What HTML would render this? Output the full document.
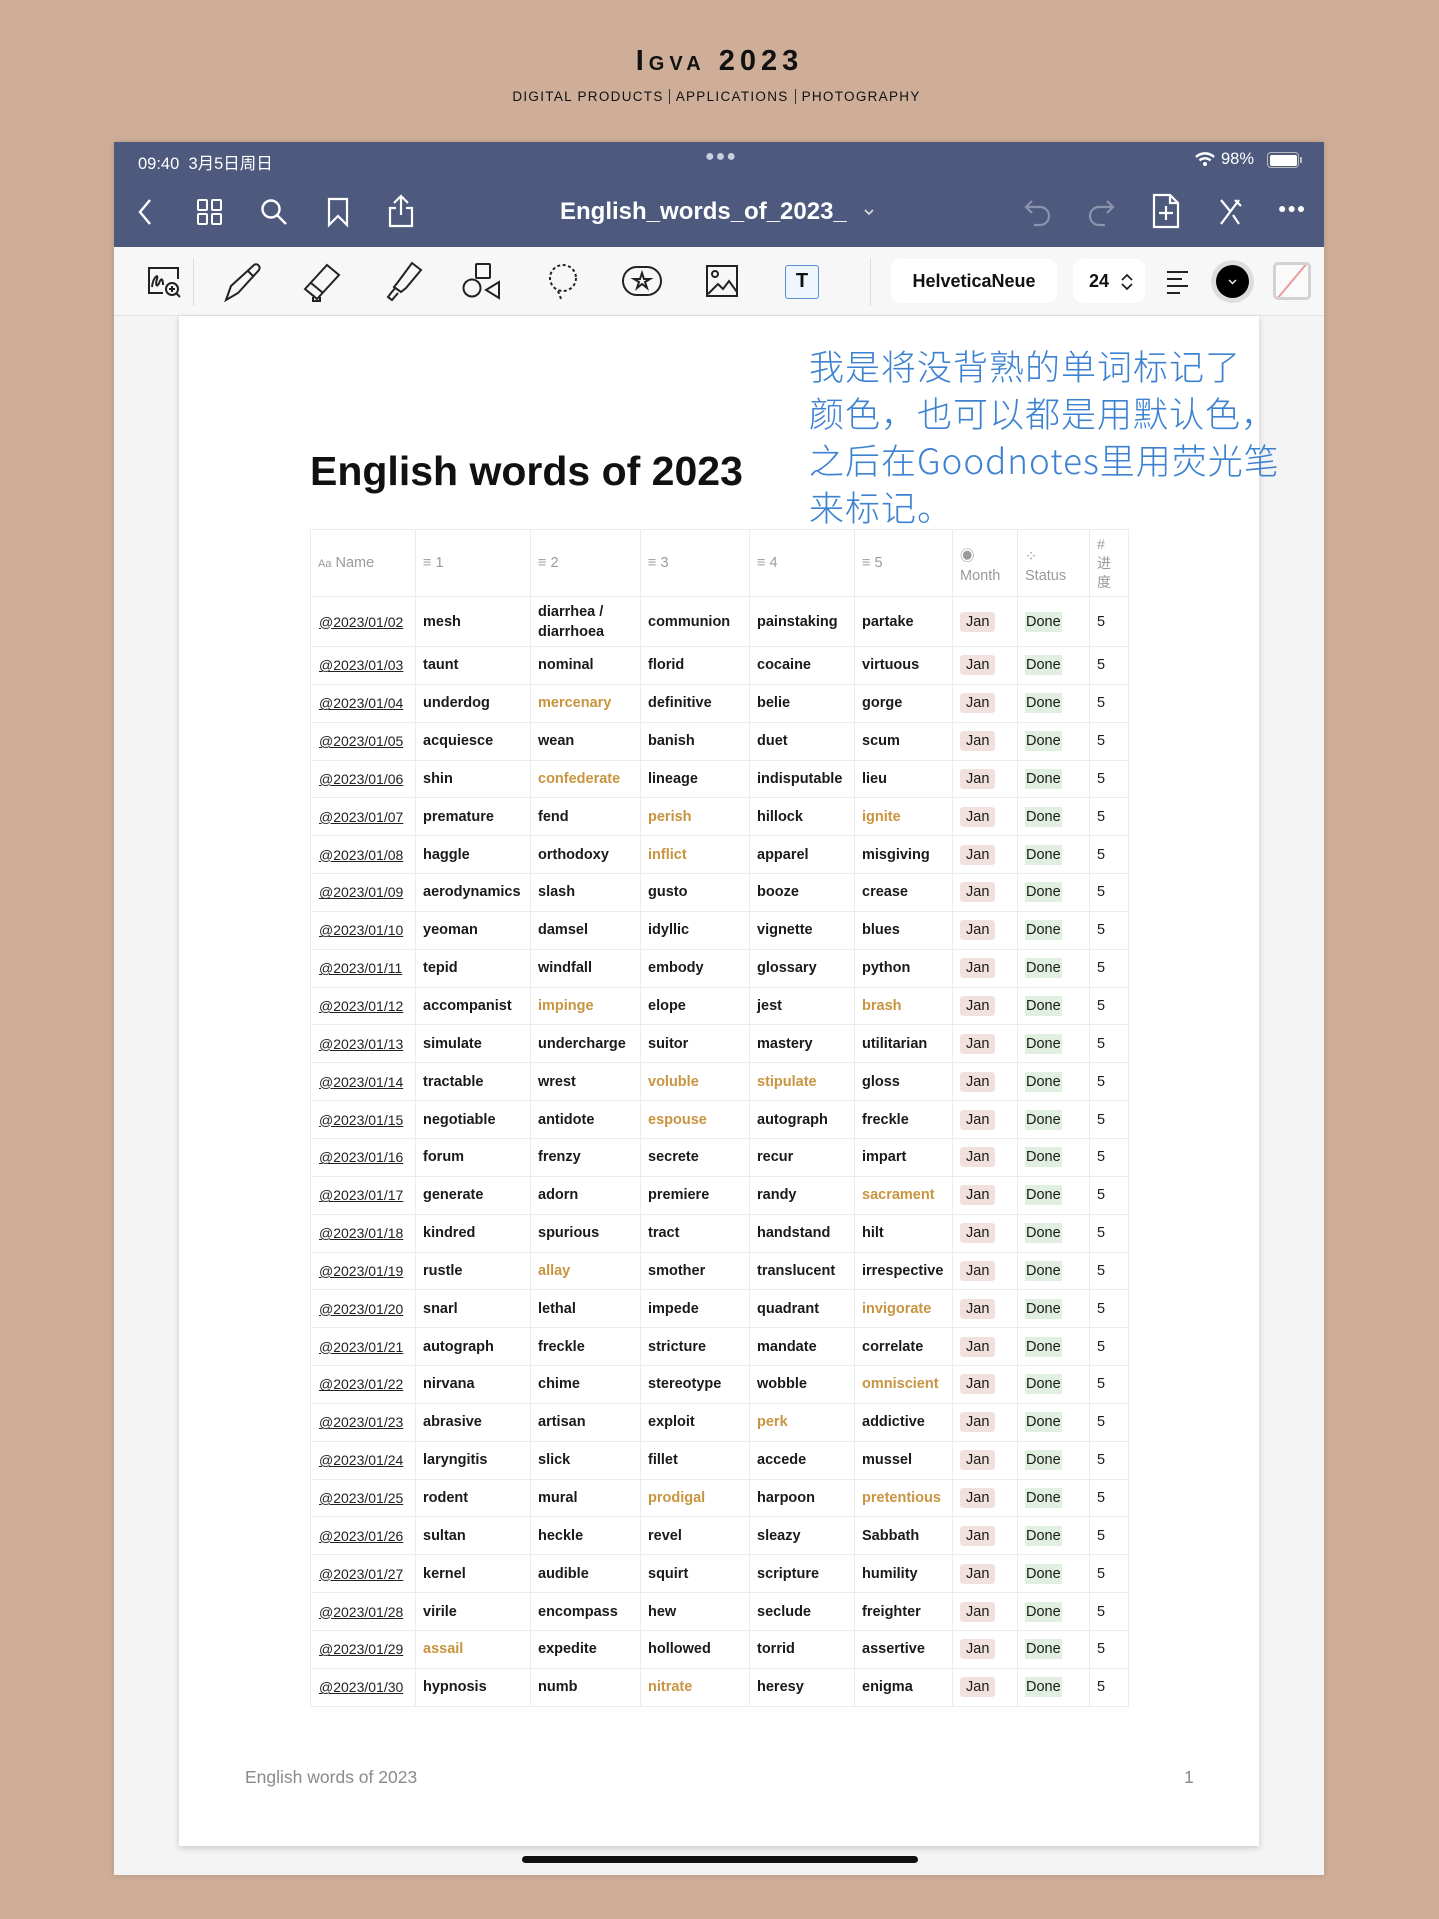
<!DOCTYPE html>
<html><head><meta charset="utf-8">
<style>
*{margin:0;padding:0;box-sizing:border-box}
body{width:1439px;height:1919px;background:#ceae98;position:relative;overflow:hidden;font-family:"Liberation Sans","Noto Sans CJK SC",sans-serif}
.abs{position:absolute}
#brand{left:0;width:1439px;top:45px;text-align:center;font-size:29px;font-weight:bold;letter-spacing:5px;color:#111;font-variant:small-caps}
#sub{left:0;width:1439px;top:89px;text-align:center;font-size:13.5px;letter-spacing:1.3px;color:#111}
#sub span{border-left:1px solid #333;padding:0 6px}
#dev{left:114px;top:142px;width:1210px;height:1733px;background:#f4f4f4;box-shadow:0 0 6px rgba(0,0,0,.15)}
#nav{left:114px;top:142px;width:1210px;height:105px;background:#4d5a7e;color:#fff}
#tool{left:114px;top:247px;width:1210px;height:69px;background:#f7f7f7;border-bottom:1px solid #e2e2e2}
#page{left:179px;top:316px;width:1080px;height:1530px;background:#fff;box-shadow:0 2px 6px rgba(0,0,0,.18)}
.w{color:#fff}
svg{position:absolute;overflow:visible}
table{position:absolute;left:310px;top:529px;border-collapse:collapse;table-layout:fixed;width:818px}
td{border:1px solid #ececec;font-size:14.5px;font-weight:bold;color:#1a1a1a;padding:0 0 0 7px;height:37.85px;white-space:nowrap;overflow:hidden}
tr.h td{height:67px;font-weight:normal;color:#9a9a9a;font-size:14.5px}
tr.f td{height:50px}
td.d{font-weight:normal;text-decoration:underline;color:#222;font-size:14px;padding-left:8px}
.o{color:#c9943f}
.j{background:#f1e1dc;padding:2px 6px;border-radius:3px;font-weight:normal}
.dn{background:#e1efe1;padding:2px 1px;font-weight:normal}
td.n{font-weight:normal}
#note{left:809px;top:342px;font-family:"WenQuanYi Zen Hei","Noto Sans CJK SC",sans-serif;font-size:35px;line-height:47px;color:#3d82d0;letter-spacing:1px;font-weight:300}
</style></head><body>
<div class="abs" id="brand">Igva 2023</div>
<div class="abs" id="sub">DIGITAL PRODUCTS <span>APPLICATIONS</span><span>PHOTOGRAPHY</span></div>
<div class="abs" id="dev"></div>
<div class="abs" id="nav"></div>
<div class="abs w" style="left:138px;top:150px;font-size:16.5px">09:40&nbsp; 3月5日周日</div>
<div class="abs w" style="left:705px;top:148px;font-size:16px;letter-spacing:1px;color:#c9cfe0">●●●</div>
<svg style="left:1195px;top:151px" width="20" height="16"><path d="M1 6 A13 13 0 0 1 19 6" stroke="#fff" stroke-width="2.4" fill="none"/><path d="M4.5 9.5 A8 8 0 0 1 15.5 9.5" stroke="#fff" stroke-width="2.4" fill="none"/><circle cx="10" cy="13" r="2" fill="#fff"/></svg>
<div class="abs w" style="left:1221px;top:150px;font-size:16.5px">98%</div>
<div class="abs" style="left:1267px;top:152px;width:32px;height:16px;border:1.5px solid #bbb;border-radius:4px;padding:1.5px"><div style="width:100%;height:100%;background:#fff;border-radius:2px"></div></div>
<div class="abs" style="left:1300px;top:157px;width:2px;height:6px;background:#bbb"></div>
<svg style="left:136px;top:198px" width="20" height="28"><path d="M14 2 L4 14 L14 26" stroke="#fff" stroke-width="2.4" fill="none"/></svg>
<svg style="left:197px;top:199px" width="26" height="26" fill="none" stroke="#fff" stroke-width="2"><rect x="1" y="1" width="9" height="10" rx="1"/><rect x="15" y="1" width="9" height="10" rx="1"/><rect x="1" y="15" width="9" height="10" rx="1"/><rect x="15" y="15" width="9" height="10" rx="1"/></svg>
<svg style="left:260px;top:198px" width="28" height="28" fill="none" stroke="#fff" stroke-width="2.4"><circle cx="11" cy="11" r="8.5"/><path d="M17 17 L26 26"/></svg>
<svg style="left:327px;top:197px" width="22" height="30" fill="none" stroke="#fff" stroke-width="2.2"><path d="M2 2 H20 V28 L11 19 L2 28 Z"/></svg>
<svg style="left:388px;top:194px" width="26" height="34" fill="none" stroke="#fff" stroke-width="2.2"><path d="M13 2 V21 M6 9 L13 2 L20 9 M8 14 H2 V32 H24 V14 H18"/></svg>
<div class="abs w" style="left:560px;top:198px;font-size:24px;font-weight:bold">English_words_of_2023_</div>
<svg style="left:864px;top:208px" width="10" height="8"><path d="M1 2 L5 6 L9 2" stroke="#ddd" stroke-width="1.6" fill="none"/></svg>
<svg style="left:1024px;top:198px" width="28" height="28" fill="none" stroke="#8b93ad" stroke-width="2.2"><path d="M8 3 L2 9 L8 15 M2 9 H16 A9 9 0 0 1 16 27 H10"/></svg>
<svg style="left:1087px;top:198px" width="28" height="28" fill="none" stroke="#8b93ad" stroke-width="2.2"><path d="M20 3 L26 9 L20 15 M26 9 H12 A9 9 0 0 0 12 27 H18"/></svg>
<svg style="left:1152px;top:193px" width="28" height="36" fill="none" stroke="#fff" stroke-width="2.2"><path d="M2 2 H18 L26 10 V34 H2 Z M18 2 V10 H26 M14 13 V27 M7 20 H21"/></svg>
<svg style="left:1217px;top:198px" width="26" height="28" fill="none" stroke="#fff" stroke-width="2.2"><path d="M4 26 L22 2 M4 2 L13 13 M16 17 L22 26 M18 2 L24 8"/></svg>
<div class="abs w" style="left:1278px;top:200px;font-size:14px;letter-spacing:1px">●●●</div>
<div class="abs" id="tool"></div>
<div class="abs" style="left:193px;top:258px;width:1px;height:48px;background:#ddd"></div>
<div class="abs" style="left:870px;top:258px;width:1px;height:48px;background:#ddd"></div>
<svg style="left:147px;top:265px" width="36" height="34" fill="none" stroke="#222" stroke-width="2"><path d="M16 28 H2 V3 H31 V14"/><path d="M5 22 C6 12 12 8 10 14 C8 20 10 24 13 16 C15 12 16 16 16 20"/><circle cx="25" cy="24" r="6"/><path d="M25 21 V27 M22 24 H28 M29 28 L33 32"/></svg>
<svg style="left:223px;top:262px" width="40" height="40" fill="none" stroke="#222" stroke-width="2"><path d="M3 38 L8 24 L31 3 C34 1 38 4 36 8 L15 31 Z M25 9 L30 14"/></svg>
<svg style="left:302px;top:262px" width="42" height="40" fill="none" stroke="#222" stroke-width="2"><path d="M3 27 L25 3 L37 13 L15 37 Z M3 27 L13 35 M9 21 L21 31"/><path d="M11 35 V39 H18 V35"/></svg>
<svg style="left:384px;top:262px" width="40" height="40" fill="none" stroke="#222" stroke-width="2"><path d="M37 8 L28 1 L14 20 L10 25 L17 30 L22 26 Z M12 25 L7 31 L4 35 L8 38 L14 31"/></svg>
<svg style="left:462px;top:263px" width="40" height="38" fill="none" stroke="#222" stroke-width="2"><rect x="14" y="1" width="14" height="14" rx="1"/><circle cx="10" cy="25" r="8.5"/><path d="M37 19 V35 L24 27 Z"/></svg>
<svg style="left:545px;top:263px" width="36" height="38" fill="none" stroke="#222" stroke-width="2" stroke-dasharray="3 2.5"><circle cx="18" cy="15" r="13"/><path d="M13 28 L16 36"/></svg>
<svg style="left:621px;top:265px" width="42" height="34" fill="none" stroke="#222" stroke-width="2"><rect x="2" y="2" width="38" height="28" rx="14"/><path d="M21 8 L23 14 H29 L24 17 L26 23 L21 19 L16 23 L18 17 L13 14 H19 Z"/></svg>
<svg style="left:705px;top:264px" width="34" height="34" fill="none" stroke="#222" stroke-width="2"><rect x="2" y="2" width="30" height="30"/><circle cx="10" cy="10" r="3"/><path d="M3 30 L13 20 L18 25 L24 17 L32 28"/></svg>
<div class="abs" style="left:785px;top:265px;width:34px;height:34px;border:1.5px solid #5b8fd4;border-radius:3px;background:#f0f6ff;text-align:center;font-weight:bold;font-size:20px;line-height:31px;color:#111">T</div>
<div class="abs" style="left:891px;top:259px;width:166px;height:44px;background:#fff;border-radius:10px;text-align:center;line-height:44px;font-size:18px;font-weight:bold;color:#111">HelveticaNeue</div>
<div class="abs" style="left:1073px;top:259px;width:72px;height:44px;background:#fff;border-radius:10px;line-height:44px;font-size:18px;font-weight:bold;color:#111;padding-left:16px">24</div>
<svg style="left:1120px;top:272px" width="14" height="20" fill="none" stroke="#222" stroke-width="1.8"><path d="M2 8 L7 3 L12 8 M2 12 L7 17 L12 12"/></svg>
<svg style="left:1166px;top:270px" width="26" height="24" stroke="#222" stroke-width="2"><path d="M1 2 H22 M1 9 H16 M1 16 H22 M1 23 H14"/></svg>
<div class="abs" style="left:1211px;top:260px;width:43px;height:43px;border-radius:50%;background:#ddd"></div>
<div class="abs" style="left:1216px;top:265px;width:33px;height:33px;border-radius:50%;background:#000"></div>
<svg style="left:1228px;top:279px" width="9" height="6"><path d="M1 1 L4.5 4.5 L8 1" stroke="#fff" stroke-width="1.3" fill="none"/></svg>
<div class="abs" style="left:1273px;top:262px;width:38px;height:38px;border:3px solid #d2d2d2;border-radius:5px;background:#fafafa;overflow:hidden"><div style="position:absolute;left:15px;top:-6px;width:1.5px;height:44px;background:#e99;transform:rotate(40deg)"></div></div>
<div class="abs" id="page"></div>
<div class="abs" style="left:310px;top:448px;font-size:41px;font-weight:bold;color:#111">English words of 2023</div>
<div class="abs" id="note">我是将没背熟的单词标记了<br>颜色，也可以都是用默认色，<br>之后在Goodnotes里用荧光笔<br>来标记。</div>
<table>
<colgroup><col style="width:105px"><col style="width:115px"><col style="width:110px"><col style="width:109px"><col style="width:105px"><col style="width:98px"><col style="width:65px"><col style="width:72px"><col style="width:39px"></colgroup>
<tr class="h"><td><span style="font-size:11px">Aa</span> Name</td><td>≡ 1</td><td>≡ 2</td><td>≡ 3</td><td>≡ 4</td><td>≡ 5</td><td style="line-height:19px;padding-top:8px">◉<br>Month</td><td style="line-height:19px;padding-top:8px">⁘<br>Status</td><td style="line-height:19px;font-size:14px">#<br>进<br>度</td></tr>
<tr class="f"><td class="d">@2023/01/02</td><td>mesh</td><td style="line-height:20px">diarrhea /<br>diarrhoea</td><td>communion</td><td>painstaking</td><td>partake</td><td><span class="j">Jan</span></td><td><span class="dn">Done</span></td><td class="n">5</td></tr>
<tr><td class="d">@2023/01/03</td><td>taunt</td><td>nominal</td><td>florid</td><td>cocaine</td><td>virtuous</td><td><span class="j">Jan</span></td><td><span class="dn">Done</span></td><td class="n">5</td></tr>
<tr><td class="d">@2023/01/04</td><td>underdog</td><td class="o">mercenary</td><td>definitive</td><td>belie</td><td>gorge</td><td><span class="j">Jan</span></td><td><span class="dn">Done</span></td><td class="n">5</td></tr>
<tr><td class="d">@2023/01/05</td><td>acquiesce</td><td>wean</td><td>banish</td><td>duet</td><td>scum</td><td><span class="j">Jan</span></td><td><span class="dn">Done</span></td><td class="n">5</td></tr>
<tr><td class="d">@2023/01/06</td><td>shin</td><td class="o">confederate</td><td>lineage</td><td>indisputable</td><td>lieu</td><td><span class="j">Jan</span></td><td><span class="dn">Done</span></td><td class="n">5</td></tr>
<tr><td class="d">@2023/01/07</td><td>premature</td><td>fend</td><td class="o">perish</td><td>hillock</td><td class="o">ignite</td><td><span class="j">Jan</span></td><td><span class="dn">Done</span></td><td class="n">5</td></tr>
<tr><td class="d">@2023/01/08</td><td>haggle</td><td>orthodoxy</td><td class="o">inflict</td><td>apparel</td><td>misgiving</td><td><span class="j">Jan</span></td><td><span class="dn">Done</span></td><td class="n">5</td></tr>
<tr><td class="d">@2023/01/09</td><td>aerodynamics</td><td>slash</td><td>gusto</td><td>booze</td><td>crease</td><td><span class="j">Jan</span></td><td><span class="dn">Done</span></td><td class="n">5</td></tr>
<tr><td class="d">@2023/01/10</td><td>yeoman</td><td>damsel</td><td>idyllic</td><td>vignette</td><td>blues</td><td><span class="j">Jan</span></td><td><span class="dn">Done</span></td><td class="n">5</td></tr>
<tr><td class="d">@2023/01/11</td><td>tepid</td><td>windfall</td><td>embody</td><td>glossary</td><td>python</td><td><span class="j">Jan</span></td><td><span class="dn">Done</span></td><td class="n">5</td></tr>
<tr><td class="d">@2023/01/12</td><td>accompanist</td><td class="o">impinge</td><td>elope</td><td>jest</td><td class="o">brash</td><td><span class="j">Jan</span></td><td><span class="dn">Done</span></td><td class="n">5</td></tr>
<tr><td class="d">@2023/01/13</td><td>simulate</td><td>undercharge</td><td>suitor</td><td>mastery</td><td>utilitarian</td><td><span class="j">Jan</span></td><td><span class="dn">Done</span></td><td class="n">5</td></tr>
<tr><td class="d">@2023/01/14</td><td>tractable</td><td>wrest</td><td class="o">voluble</td><td class="o">stipulate</td><td>gloss</td><td><span class="j">Jan</span></td><td><span class="dn">Done</span></td><td class="n">5</td></tr>
<tr><td class="d">@2023/01/15</td><td>negotiable</td><td>antidote</td><td class="o">espouse</td><td>autograph</td><td>freckle</td><td><span class="j">Jan</span></td><td><span class="dn">Done</span></td><td class="n">5</td></tr>
<tr><td class="d">@2023/01/16</td><td>forum</td><td>frenzy</td><td>secrete</td><td>recur</td><td>impart</td><td><span class="j">Jan</span></td><td><span class="dn">Done</span></td><td class="n">5</td></tr>
<tr><td class="d">@2023/01/17</td><td>generate</td><td>adorn</td><td>premiere</td><td>randy</td><td class="o">sacrament</td><td><span class="j">Jan</span></td><td><span class="dn">Done</span></td><td class="n">5</td></tr>
<tr><td class="d">@2023/01/18</td><td>kindred</td><td>spurious</td><td>tract</td><td>handstand</td><td>hilt</td><td><span class="j">Jan</span></td><td><span class="dn">Done</span></td><td class="n">5</td></tr>
<tr><td class="d">@2023/01/19</td><td>rustle</td><td class="o">allay</td><td>smother</td><td>translucent</td><td>irrespective</td><td><span class="j">Jan</span></td><td><span class="dn">Done</span></td><td class="n">5</td></tr>
<tr><td class="d">@2023/01/20</td><td>snarl</td><td>lethal</td><td>impede</td><td>quadrant</td><td class="o">invigorate</td><td><span class="j">Jan</span></td><td><span class="dn">Done</span></td><td class="n">5</td></tr>
<tr><td class="d">@2023/01/21</td><td>autograph</td><td>freckle</td><td>stricture</td><td>mandate</td><td>correlate</td><td><span class="j">Jan</span></td><td><span class="dn">Done</span></td><td class="n">5</td></tr>
<tr><td class="d">@2023/01/22</td><td>nirvana</td><td>chime</td><td>stereotype</td><td>wobble</td><td class="o">omniscient</td><td><span class="j">Jan</span></td><td><span class="dn">Done</span></td><td class="n">5</td></tr>
<tr><td class="d">@2023/01/23</td><td>abrasive</td><td>artisan</td><td>exploit</td><td class="o">perk</td><td>addictive</td><td><span class="j">Jan</span></td><td><span class="dn">Done</span></td><td class="n">5</td></tr>
<tr><td class="d">@2023/01/24</td><td>laryngitis</td><td>slick</td><td>fillet</td><td>accede</td><td>mussel</td><td><span class="j">Jan</span></td><td><span class="dn">Done</span></td><td class="n">5</td></tr>
<tr><td class="d">@2023/01/25</td><td>rodent</td><td>mural</td><td class="o">prodigal</td><td>harpoon</td><td class="o">pretentious</td><td><span class="j">Jan</span></td><td><span class="dn">Done</span></td><td class="n">5</td></tr>
<tr><td class="d">@2023/01/26</td><td>sultan</td><td>heckle</td><td>revel</td><td>sleazy</td><td>Sabbath</td><td><span class="j">Jan</span></td><td><span class="dn">Done</span></td><td class="n">5</td></tr>
<tr><td class="d">@2023/01/27</td><td>kernel</td><td>audible</td><td>squirt</td><td>scripture</td><td>humility</td><td><span class="j">Jan</span></td><td><span class="dn">Done</span></td><td class="n">5</td></tr>
<tr><td class="d">@2023/01/28</td><td>virile</td><td>encompass</td><td>hew</td><td>seclude</td><td>freighter</td><td><span class="j">Jan</span></td><td><span class="dn">Done</span></td><td class="n">5</td></tr>
<tr><td class="d">@2023/01/29</td><td class="o">assail</td><td>expedite</td><td>hollowed</td><td>torrid</td><td>assertive</td><td><span class="j">Jan</span></td><td><span class="dn">Done</span></td><td class="n">5</td></tr>
<tr><td class="d">@2023/01/30</td><td>hypnosis</td><td>numb</td><td class="o">nitrate</td><td>heresy</td><td>enigma</td><td><span class="j">Jan</span></td><td><span class="dn">Done</span></td><td class="n">5</td></tr>
</table>
<div class="abs" style="left:245px;top:1767px;font-size:17.5px;color:#8a8a8a">English words of 2023</div>
<div class="abs" style="left:1184px;top:1767px;font-size:17.5px;color:#8a8a8a">1</div>
<div class="abs" style="left:522px;top:1856px;width:396px;height:7px;border-radius:4px;background:#111"></div>
</body></html>
